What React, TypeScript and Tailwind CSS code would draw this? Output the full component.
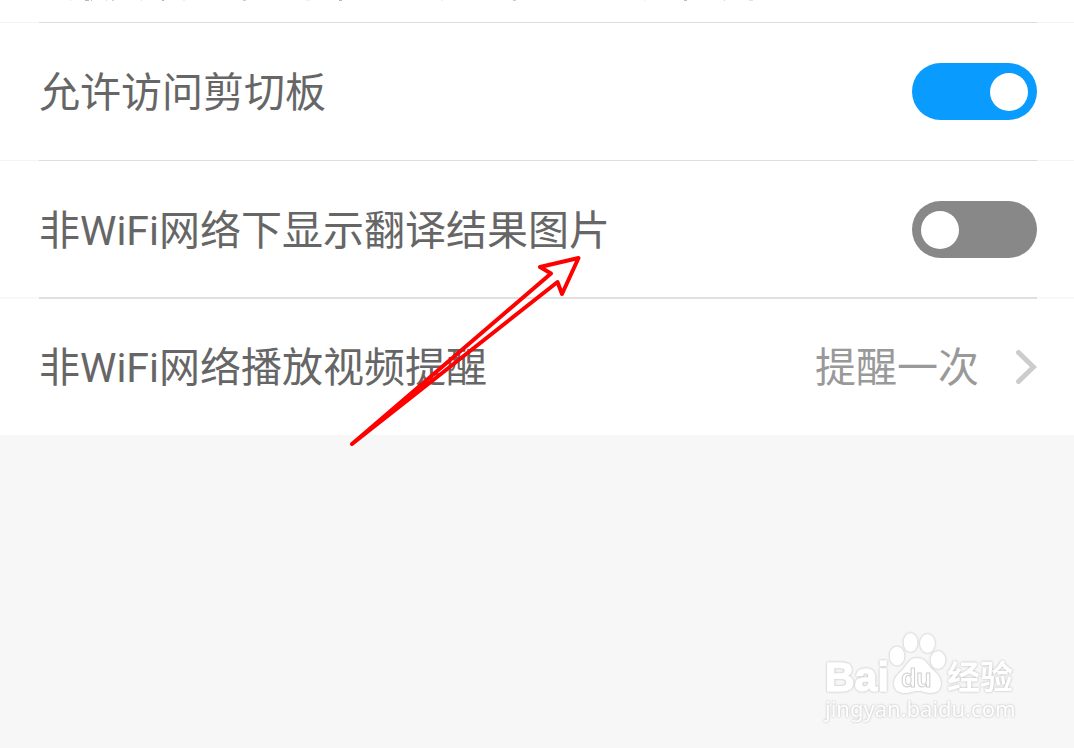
import { useState, type ReactNode } from 'react';

const specks: [number, number, string][] = [
  [69, 3, '#f3f3f3'], [85, 4, '#b9b9b9'], [91, 1, '#c0c0c0'], [106, 1, '#d8d8d8'],
  [112, 2, '#d4d4d4'], [141, 1, '#e4e4e4'], [162, 2, '#b4b4b4'], [183, 2, '#ececec'],
  [243, 3, '#cccccc'], [306, 4, '#f2f2f2'], [339, 3, '#b8b8b8'], [441, 2, '#f0f0f0'],
  [513, 3, '#cfcfcf'], [644, 2, '#f4f4f4'], [684, 3, '#bfbfbf'], [724, 1, '#d4d4d4'],
  [749, 4, '#e2e2e2'],
];

function Divider({ thick = false }: { thick?: boolean }) {
  return (
    <div className={thick ? '-mt-px bg-[#f8f8f8] pl-[39px] pr-[37px]' : 'bg-[#f4f4f4] pl-[39px] pr-[37px]'}>
      <div className={thick ? 'h-[2px] bg-[#e0e0e0]' : 'h-px bg-[#dddddd]'} />
    </div>
  );
}

function SwitchRow({ id, defaultChecked, children }: { id: string; defaultChecked: boolean; children: ReactNode }) {
  const [on, setOn] = useState(defaultChecked);
  return (
    <div className="flex items-center justify-between py-10 pl-[39px] pr-[37px]">
      <label htmlFor={id} className="pt-[2px]">{children}</label>
      <input
        id={id}
        type="checkbox"
        role="switch"
        checked={on}
        onChange={(e) => setOn(e.target.checked)}
        className="flex h-[57px] w-[125px] shrink-0 cursor-pointer appearance-none items-center rounded-full bg-[#888888] px-[9px] before:size-[38px] before:rounded-full before:bg-white before:content-[''] checked:justify-end checked:bg-[#0a9bff]"
      />
    </div>
  );
}

function Watermark() {
  return (
    <svg
      aria-hidden="true"
      className="pointer-events-none absolute right-[34px] bottom-[8px] h-[120px] w-[240px] drop-shadow-[0_0_1px_#b4b4b4]"
      viewBox="0 0 240 120"
      fill="#ffffff"
      strokeLinejoin="round"
    >
      <text x="25" y="71" fontFamily="Liberation Sans" fontWeight="700" fontSize="41" stroke="#ffffff" strokeWidth="1.500">Bai</text>
      <ellipse cx="97" cy="36" rx="7.500" ry="9.500" />
      <ellipse cx="110.500" cy="22.500" rx="7" ry="9.500" />
      <ellipse cx="127.500" cy="23.500" rx="7.500" ry="9.500" />
      <ellipse cx="138" cy="40" rx="7.500" ry="9" />
      <path d="M117 38C110 38 108 43 104 48C99 54 93 57 94 65C95 71 99 73 105 73C112 73 112 71 118 71C124 71 125 73 131 73C137 73 141 70 141 63C141 56 136 53 131 48C126 42 124 38 117 38Z" />
      <text x="101" y="67" fontFamily="Liberation Sans" fontWeight="700" fontSize="25" stroke="#cfcfcf" strokeWidth="1">du</text>
      <text x="147" y="69" fontFamily="Noto Sans CJK SC" fontWeight="700" fontSize="33">经验</text>
      <text x="25" y="97" fontFamily="Noto Sans" fontWeight="400" fontSize="22">jingyan.baidu.com</text>
    </svg>
  );
}

export default function App() {
  return (
    <div className="relative min-h-screen overflow-hidden bg-[#f7f7f7] font-['Roboto','Noto_Sans_CJK_SC',sans-serif] text-[41px] leading-[48px] text-[#666666]">
      <main className="bg-white">
        <div className="h-[22px]">
          <svg aria-hidden="true" className="block h-px w-[800px]" viewBox="0 0 800 1" shapeRendering="crispEdges">
            {specks.map(([x, w, c]) => (
              <rect key={x} x={x} width={w} height="1" fill={c} />
            ))}
          </svg>
        </div>
        <Divider />
        <SwitchRow id="clipboard" defaultChecked>允许访问剪切板</SwitchRow>
        <Divider />
        <SwitchRow id="images" defaultChecked={false}>非WiFi网络下显示翻译结果图片</SwitchRow>
        <Divider thick />
        <button type="button" className="flex w-full cursor-pointer items-center justify-between py-[43px] pl-[39px] pr-[37px] text-left">
          <span className="pt-[2px]">非WiFi网络播放视频提醒</span>
          <span className="flex items-center gap-9 text-[#999999]">
            <span className="pt-[2px]">提醒一次</span>
            <svg aria-hidden="true" className="h-[36px] w-[22px]" viewBox="0 0 22 36" fill="none" stroke="#cccccc" strokeWidth="5" strokeLinecap="round">
              <path d="M3.500 3.500L18.500 18L3.500 32.500" />
            </svg>
          </span>
        </button>
      </main>
      <svg
        aria-hidden="true"
        className="pointer-events-none absolute top-[250px] left-[340px] h-[200px] w-[250px]"
        viewBox="340 250 250 200"
        fill="none"
        stroke="#ff0000"
        strokeWidth="4"
        strokeLinejoin="round"
      >
        <path d="M352 444L551 273.500L540 267L578.500 258L562 294L557.500 282Z" />
      </svg>
      <Watermark />
    </div>
  );
}
